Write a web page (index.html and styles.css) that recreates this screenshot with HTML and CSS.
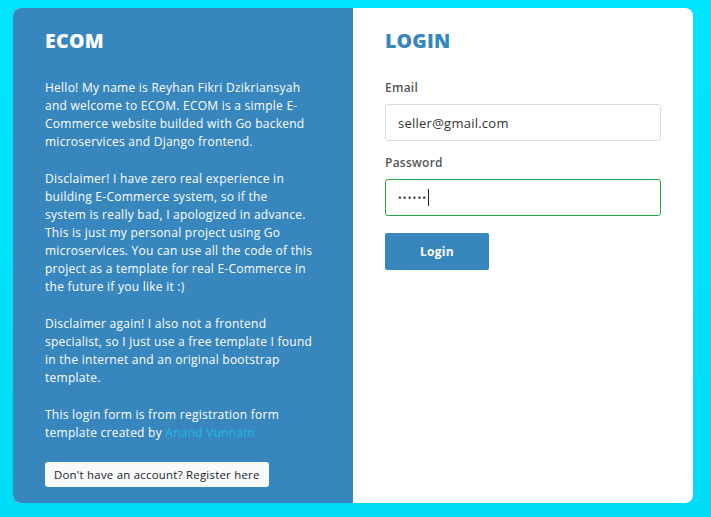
FILE: index.html
```html
<!DOCTYPE html>
<html>
<head>
<meta charset="utf-8">
<link rel="stylesheet" href="styles.css">
</head>
<body>
<div class="card">
  <section class="info">
    <h1 class="brand">ECOM</h1>
    <p>Hello! My name is Reyhan Fikri Dzikriansyah<br>and welcome to ECOM. ECOM is a simple E-<br>Commerce website builded with Go backend<br>microservices and Django frontend.</p>
    <p>Disclaimer! I have zero real experience in<br>building E-Commerce system, so if the<br>system is really bad, I apologized in advance.<br>This is just my personal project using Go<br>microservices. You can use all the code of this<br>project as a template for real E-Commerce in<br>the future if you like it :)</p>
    <p>Disclaimer again! I also not a frontend<br>specialist, so I just use a free template I found<br>in the internet and an original bootstrap<br>template.</p>
    <p>This login form is from registration form<br>template created by <a class="credit" href="#">Anand Vunnam</a></p>
    <a class="register" href="#">Don't have an account? Register here</a>
  </section>
  <section class="login">
    <h2 class="login-title">LOGIN</h2>
    <form class="form">
      <label class="label">Email</label>
      <div class="input">seller@gmail.com</div>
      <label class="label">Password</label>
      <div class="input focus"><span class="dots">••••••</span><span class="caret"></span></div>
      <button class="btn" type="button">Login</button>
    </form>
  </section>
</div>
</body>
</html>
```
FILE: styles.css
```css
html, body { margin: 0; height: 100%; }
body {
  background: linear-gradient(#00e5ff, #00dcf5);
  padding: 8px 18px 14px 13px;
  box-sizing: border-box;
  font-family: "Open Sans", "Liberation Sans", sans-serif;
  letter-spacing: 0.25px;
}
.card {
  display: flex;
  height: 495px;
  border-radius: 8px;
  overflow: hidden;
  background: #fff;
}
.info {
  width: 340px;
  flex: none;
  box-sizing: border-box;
  background: #3786bd;
  color: #fff;
  padding: 20px 16px 0 32px;
  font-size: 12px;
  line-height: 18px;
}
.brand {
  margin: 0 0 25px;
  font-size: 19.5px;
  font-weight: 800;
  line-height: 26px;
  letter-spacing: 0.3px;
}
.info p { margin: 0 0 19px; font-weight: 500; white-space: nowrap; }
.credit { color: #1db8e6; text-decoration: none; }
.register {
  display: inline-block;
  background: #f8f9fa;
  color: #212529;
  text-decoration: none;
  border-radius: 3px;
  font-size: 11.4px;
  line-height: 25px;
  padding: 0 9px;
  margin-top: 1px;
}
.login {
  flex: 1;
  padding: 20px 32px 0 32px;
}
.login-title {
  margin: 0 0 26px;
  color: #3786bd;
  font-size: 19.5px;
  font-weight: 800;
  line-height: 26px;
  letter-spacing: 0.2px;
}
.form { display: flex; flex-direction: column; align-items: flex-start; }
.label {
  font-size: 12px;
  font-weight: 600;
  color: #555;
  line-height: 16px;
  margin-bottom: 8px;
}
.input {
  width: 276px;
  height: 37px;
  box-sizing: border-box;
  border: 1px solid #ddd;
  border-radius: 3px;
  padding: 0 12px;
  display: flex;
  align-items: center;
  font-size: 13px;
  color: #333;
  margin-bottom: 14px;
}
.input.focus { border-color: #28a745; margin-bottom: 17px; }
.dots { font-size: 10px; letter-spacing: 1.1px; color: #333; }
.caret { width: 1px; height: 17px; background: #222; margin-left: 1px; }
.btn {
  width: 104px;
  height: 37px;
  background: #3786bd;
  color: #fff;
  border: 0;
  border-radius: 2px;
  font-family: inherit;
  font-size: 12px;
  font-weight: 700;
  letter-spacing: 0.3px;
}
```
